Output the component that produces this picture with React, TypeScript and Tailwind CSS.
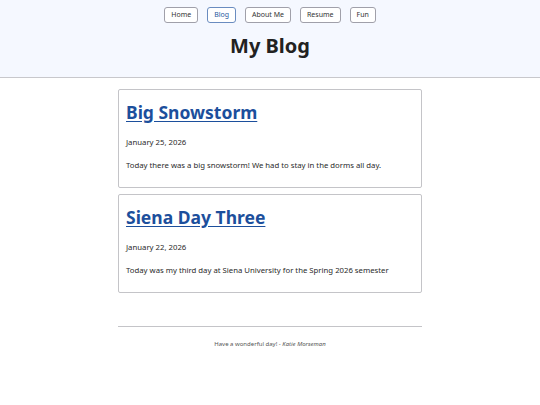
const posts = [
  {
    title: "Big Snowstorm",
    date: "January 25, 2026",
    body: "Today there was a big snowstorm! We had to stay in the dorms all day.",
  },
  {
    title: "Siena Day Three",
    date: "January 22, 2026",
    body: "Today was my third day at Siena University for the Spring 2026 semester",
  },
];

const nav = ["Home", "Blog", "About Me", "Resume", "Fun"];

export default function App() {
  return (
    <div className="min-h-screen bg-white text-[#222] font-['Noto_Sans',sans-serif]">
      <header className="bg-[#f5f8ff] border-b border-[#c8c8cc] pt-[7px] h-[78px]">
        <nav className="flex justify-center gap-[9px]">
          {nav.map((n) => (
            <a
              key={n}
              href="#"
              className={
                n === "Blog"
                  ? "h-[16px] px-[6px] flex items-center rounded-[3px] border border-[#6a8cc0] bg-white text-[7px] text-[#2a5aa0]"
                  : "h-[16px] px-[6px] flex items-center rounded-[3px] border border-[#a0a0aa] bg-white text-[7px] text-[#333]"
              }
            >
              {n}
            </a>
          ))}
        </nav>
        <h1 className="mt-[8px] text-center text-[20px] font-bold leading-[30px] text-[#222]">My Blog</h1>
      </header>

      <main className="w-[304px] mx-auto mt-[11px] flex flex-col gap-[6px]">
        {posts.map((p) => (
          <article key={p.title} className="border border-[#c4c4c8] rounded-[2px] px-[7px] pt-[9px] h-[99px]">
            <h2 className="text-[17.5px] font-bold leading-[26px]">
              <a href="#" className="text-[#1c4f9c] underline underline-offset-[2px]">
                {p.title}
              </a>
            </h2>
            <p className="mt-[11px] text-[7.75px] leading-[12px] text-[#2a2a2a]">{p.date}</p>
            <p className="mt-[11px] text-[7.75px] leading-[12px] text-[#2a2a2a]">{p.body}</p>
          </article>
        ))}
      </main>

      <footer className="w-[304px] mx-auto mt-[33px] border-t border-[#c4c4c8] pt-[13px] text-center text-[6px] text-[#555]">
        Have a wonderful day! - <em>Katie Morseman</em>
      </footer>
    </div>
  );
}
